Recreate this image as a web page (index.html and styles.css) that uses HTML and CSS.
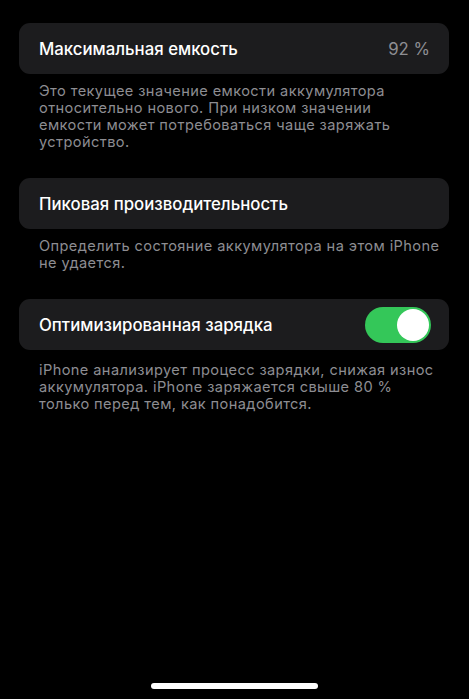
FILE: index.html
```html
<!DOCTYPE html>
<html lang="ru">
<head>
<meta charset="utf-8">
<link rel="stylesheet" href="styles.css">
</head>
<body>
<main class="screen">
  <section class="group">
    <div class="card">
      <span class="title">Максимальная емкость</span>
      <span class="value">92 %</span>
    </div>
    <p class="note">Это текущее значение емкости аккумулятора<br>относительно нового. При низком значении<br>емкости может потребоваться чаще заряжать<br>устройство.</p>
  </section>
  <section class="group">
    <div class="card">
      <span class="title">Пиковая производительность</span>
    </div>
    <p class="note">Определить состояние аккумулятора на этом iPhone<br>не удается.</p>
  </section>
  <section class="group">
    <div class="card">
      <span class="title">Оптимизированная зарядка</span>
      <span class="toggle"><span class="knob"></span></span>
    </div>
    <p class="note note-last">iPhone анализирует процесс зарядки, снижая износ<br>аккумулятора. iPhone заряжается свыше 80 %<br>только перед тем, как понадобится.</p>
  </section>
</main>
<div class="home-indicator"></div>
</body>
</html>
```
FILE: styles.css
```css
html, body {
  margin: 0;
  padding: 0;
  background: #000;
  height: 100%;
}
body {
  font-family: Inter, "Noto Sans", sans-serif;
  color: #fff;
  position: relative;
  overflow: hidden;
}
.screen {
  padding: 23px 20px 0 19px;
  display: flex;
  flex-direction: column;
  gap: 27px;
}
.card {
  background: #1c1c1e;
  border-radius: 11px;
  height: 51px;
  padding: 0 19px 0 20px;
  display: flex;
  align-items: center;
  justify-content: space-between;
}
.title {
  font-size: 16.8px;
  font-weight: 500;
  letter-spacing: 0;
}
.value {
  font-size: 16.8px;
  color: #8e8e93;
}
.note {
  margin: 9px 0 0 20px;
  font-size: 14.6px;
  line-height: 17px;
  color: #8d8d92;
  letter-spacing: 0.4px;
  white-space: nowrap;
}
.note-last {
  margin-top: 12px;
}
.toggle {
  width: 66px;
  height: 36px;
  border-radius: 18px;
  background: #34c759;
  display: flex;
  align-items: center;
  justify-content: flex-end;
  padding: 0 2px;
  box-sizing: border-box;
  margin-right: -1px;
}
.knob {
  width: 32px;
  height: 32px;
  border-radius: 50%;
  background: #fff;
}
.home-indicator {
  position: absolute;
  left: 151px;
  top: 683px;
  width: 167px;
  height: 6px;
  border-radius: 3px;
  background: #fff;
}
```
